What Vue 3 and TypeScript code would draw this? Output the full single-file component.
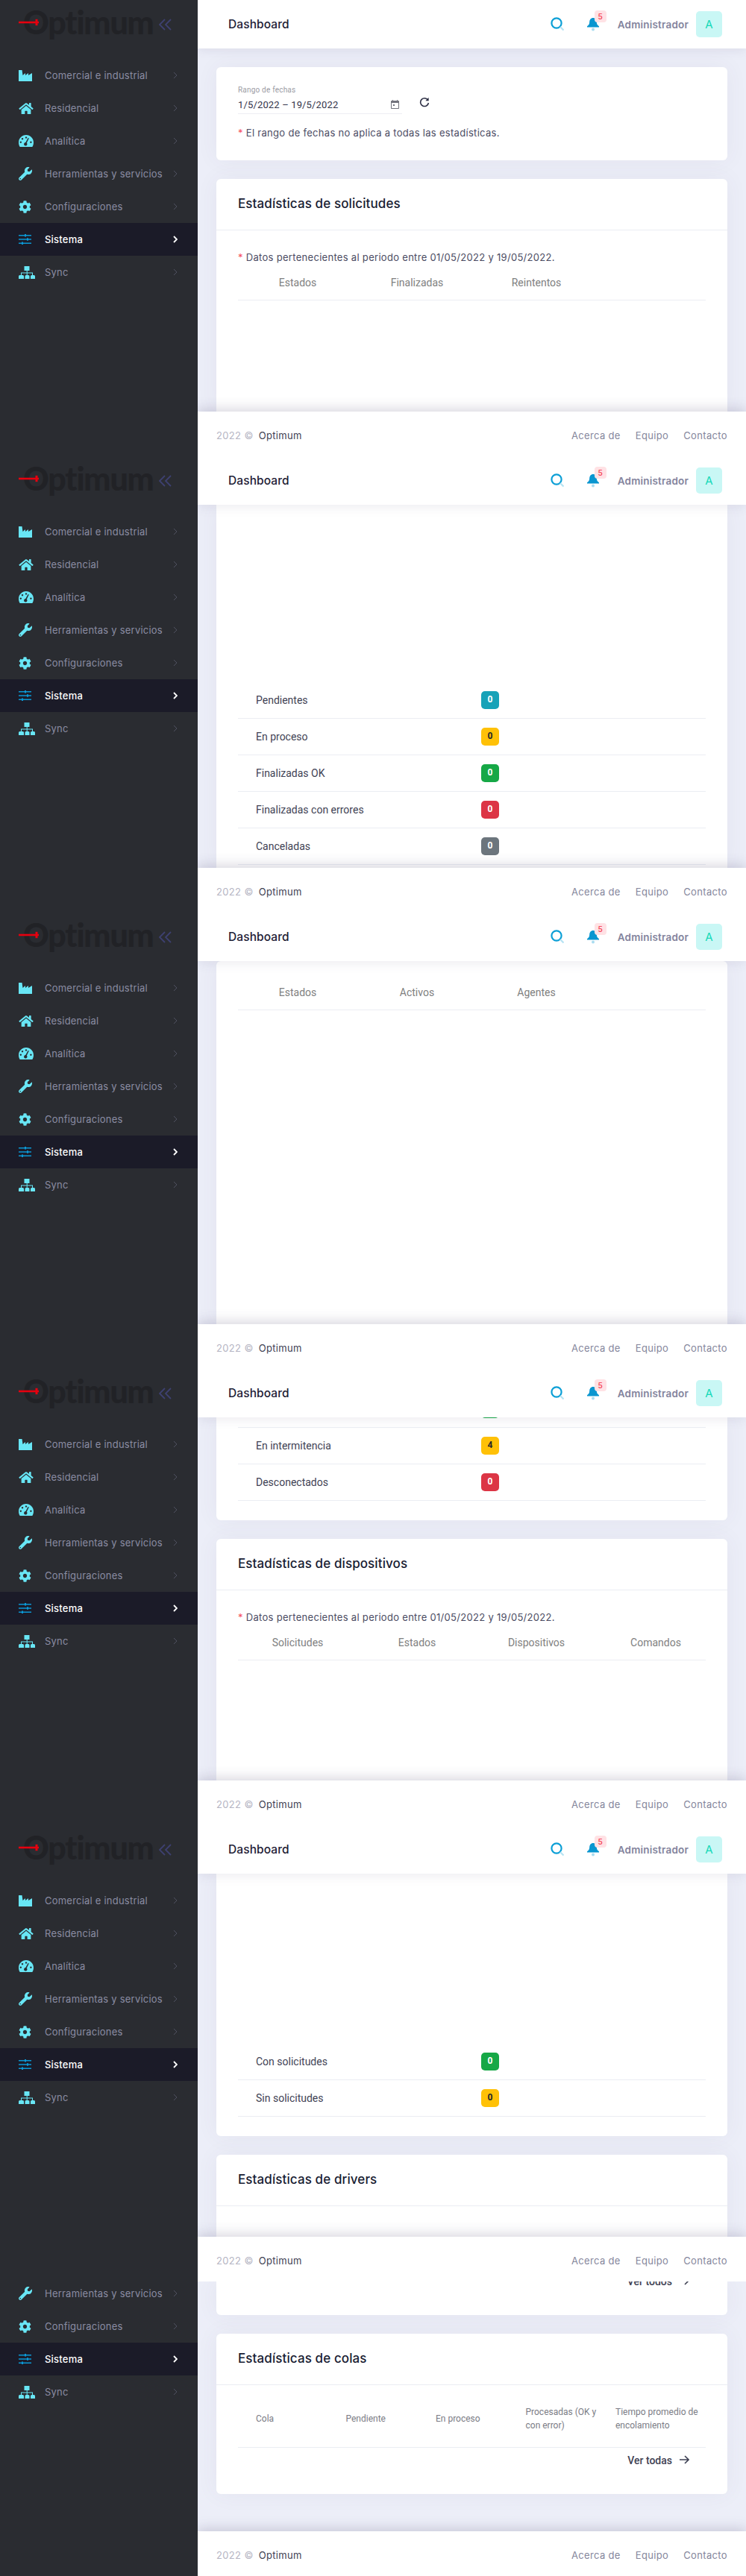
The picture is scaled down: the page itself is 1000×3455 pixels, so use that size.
<template>
  <div class="page">
    <section v-for="shot in shots" :key="shot" class="shot" :class="{ last: shot === 6 }">
      <aside class="sidebar">
        <div v-if="shot !== 6" class="brand">
          <span class="logo-text">Optimum</span>
          <svg class="logo-arrow" width="28" height="10" viewBox="0 0 28 10">
            <path d="M0 5h27" stroke="#e6000f" stroke-width="2.6" />
            <path d="M24 .8v8.4" stroke="#e6000f" stroke-width="3" />
          </svg>
          <svg class="collapse" width="17" height="16" viewBox="0 0 17 16" fill="none" stroke="#3d4070" stroke-width="1.8">
            <path d="M8 1 1 8l7 7M16 1 9 8l7 7" />
          </svg>
        </div>
        <nav class="menu">
          <a
            v-for="item in shot === 6 ? menu.slice(3) : menu"
            :key="item.label"
            class="menu-item"
            :class="{ active: item.active }"
          >
            <span class="menu-icon">
              <svg :width="item.w" :height="item.h" :viewBox="item.box">
                <path :d="item.d" fill-rule="evenodd" />
              </svg>
            </span>
            <span class="menu-label">{{ item.label }}</span>
            <svg class="menu-chevron" width="6" height="10" viewBox="0 0 6 10" fill="none">
              <path d="M1 1l4 4-4 4" />
            </svg>
          </a>
        </nav>
      </aside>

      <div class="main">
        <header v-if="shot !== 6" class="topbar">
          <h1>Dashboard</h1>
          <svg class="search" width="18" height="19" viewBox="0 0 18 19" fill="none">
            <circle cx="8" cy="8" r="6.6" stroke="#0c9fd6" stroke-width="2.2" />
            <path d="M13 13l4.500 4.500" stroke="#b5e3f3" stroke-width="2.2" />
          </svg>
          <span class="bell">
            <svg width="18" height="19" viewBox="0 0 18 19">
              <path d="M9 1c3 0 4.600 2.400 4.800 5.500.2 2.900 1 4.300 3.200 5.700v1.300H1v-1.300c2.200-1.400 3-2.800 3.200-5.700C4.400 3.400 6 1 9 1z" fill="#0a96d0" />
              <circle cx="9" cy="16.500" r="2" fill="#a9dcf0" />
            </svg>
            <b class="bell-count">5</b>
          </span>
          <span class="user-name">Administrador</span>
          <span class="avatar">A</span>
        </header>

        <div class="content">
          <!-- first screen -->
          <template v-if="shot === 1">
            <div class="card filter">
              <div class="filter-line">
                <div class="date-field">
                  <label>Rango de fechas</label>
                  <div class="date-value">
                    <span>1/5/2022 – 19/5/2022</span>
                    <svg width="11" height="12" viewBox="0 0 11 12">
                      <path d="M2 0h1v1h5V0h1v1h1.200c.4 0 .8.4.8.8v9.400c0 .4-.4.8-.8.8H.8c-.4 0-.8-.4-.8-.8V1.800C0 1.400.4 1 .8 1H2zM1 4v7h9V4zm2 2h2v2H3z" fill="#71727c" fill-rule="evenodd" />
                    </svg>
                  </div>
                </div>
                <svg class="refresh" width="14" height="14" viewBox="0 0 14 14" fill="none" stroke="#2d2f45" stroke-width="1.600">
                  <path d="M11.800 4.500A5.400 5.400 0 1 0 12.400 8" />
                  <path d="M12.600 .8v4.400H8.400" fill="#2d2f45" stroke="none" />
                </svg>
              </div>
              <p class="note"><i>*</i> El rango de fechas no aplica a todas las estadísticas.</p>
            </div>
            <div class="card grow clipped">
              <div class="card-head"><h2>Estadísticas de solicitudes</h2></div>
              <div class="card-body">
                <p class="note"><i>*</i> {{ period }}</p>
                <div class="thead">
                  <span v-for="h in ['Estados', 'Finalizadas', 'Reintentos']" :key="h">{{ h }}</span>
                </div>
              </div>
            </div>
          </template>

          <!-- request states -->
          <div v-else-if="shot === 2" class="card grow clipped flush end tail">
            <div v-for="row in requestRows" :key="row.label" class="row">
              <span>{{ row.label }}</span>
              <b class="badge" :class="row.tone">{{ row.value }}</b>
            </div>
          </div>

          <!-- agents -->
          <div v-else-if="shot === 3" class="card grow clipped flush">
            <div class="thead agents">
              <span v-for="h in ['Estados', 'Activos', 'Agentes']" :key="h">{{ h }}</span>
            </div>
          </div>

          <!-- devices -->
          <template v-else-if="shot === 4">
            <div class="card flush open-top pad-bottom">
              <div class="row cut">
                <span></span>
                <b class="badge success">0</b>
              </div>
              <div v-for="row in agentRows" :key="row.label" class="row">
                <span>{{ row.label }}</span>
                <b class="badge" :class="row.tone">{{ row.value }}</b>
              </div>
            </div>
            <div class="card grow clipped">
              <div class="card-head"><h2>Estadísticas de dispositivos</h2></div>
              <div class="card-body">
                <p class="note"><i>*</i> {{ period }}</p>
                <div class="thead">
                  <span v-for="h in ['Solicitudes', 'Estados', 'Dispositivos', 'Comandos']" :key="h">{{ h }}</span>
                </div>
              </div>
            </div>
          </template>

          <!-- device requests + drivers -->
          <template v-else-if="shot === 5">
            <div class="card grow flush open-top end pad-bottom">
              <div v-for="row in deviceRows" :key="row.label" class="row">
                <span>{{ row.label }}</span>
                <b class="badge" :class="row.tone">{{ row.value }}</b>
              </div>
            </div>
            <div class="card clipped drivers">
              <div class="card-head"><h2>Estadísticas de drivers</h2></div>
            </div>
          </template>

          <!-- queues, page end -->
          <template v-else>
            <div class="card flush open-top see-all cut-more">
              <a class="more">Ver todos <svg width="13" height="12" viewBox="0 0 13 12" fill="none"><path d="M0 6h12M7 1l5 5-5 5" /></svg></a>
            </div>
            <div class="card">
              <div class="card-head"><h2>Estadísticas de colas</h2></div>
              <div class="card-body queue-body">
                <div class="qhead">
                  <span v-for="h in queueHead" :key="h">{{ h }}</span>
                </div>
                <div class="see-all">
                  <a class="more">Ver todas <svg width="13" height="12" viewBox="0 0 13 12" fill="none"><path d="M0 6h12M7 1l5 5-5 5" /></svg></a>
                </div>
              </div>
            </div>
          </template>
        </div>

        <footer class="footer">
          <span class="copy"><em>2022 ©</em> Optimum</span>
          <span class="links"><a>Acerca de</a><a>Equipo</a><a>Contacto</a></span>
        </footer>
      </div>
    </section>
  </div>
</template>

<script setup lang="ts">
interface MenuItem {
  label: string
  w: number
  h: number
  box: string
  d: string
  active?: boolean
}

interface StatRow {
  label: string
  value: number
  tone: string
}

const shots = [1, 2, 3, 4, 5, 6]

const period = 'Datos pertenecientes al periodo entre 01/05/2022 y 19/05/2022.'

const menu: MenuItem[] = [
  {
    label: 'Comercial e industrial',
    w: 18,
    h: 15,
    box: '0 0 18 15',
    d: 'M0 0h4.500l1 7L9 4v3l4-3v3l5-3v11H0z'
  },
  {
    label: 'Residencial',
    w: 20,
    h: 17,
    box: '0 0 576 512',
    d: 'M280.37 148.26L96 300.11V464a16 16 0 0 0 16 16l112.06-.29a16 16 0 0 0 15.92-16V368a16 16 0 0 1 16-16h64a16 16 0 0 1 16 16v95.64a16 16 0 0 0 16 16.05L464 480a16 16 0 0 0 16-16V300L295.67 148.26a12.19 12.19 0 0 0-15.3 0zM571.6 251.47L488 182.56V44.05a12 12 0 0 0-12-12h-56a12 12 0 0 0-12 12v72.61L318.47 43a48 48 0 0 0-61 0L4.34 251.47a12 12 0 0 0-1.6 16.9l25.5 31A12 12 0 0 0 45.15 301l235.22-193.74a12.19 12.19 0 0 1 15.3 0L530.9 301a12 12 0 0 0 16.9-1.6l25.5-31a12 12 0 0 0-1.7-16.93z'
  },
  {
    label: 'Analítica',
    w: 20,
    h: 16,
    box: '0 0 20 16',
    d: 'M10 0C4.500 0 0 4.500 0 10c0 2.300.6 4.400 1.700 6h16.600c1.100-1.600 1.700-3.700 1.700-6 0-5.500-4.500-10-10-10zM10 2.300a1.200 1.200 0 1 0 .01 0zM5 4a1.200 1.200 0 1 0 .01 0zM2.800 8.500a1.200 1.200 0 1 0 .01 0zM16.400 8.500a1.200 1.200 0 1 0 .01 0zM13.800 4.500l-3 6.200a2.200 2.200 0 1 1-1.500-.6l3.300-6.100z'
  },
  {
    label: 'Herramientas y servicios',
    w: 18,
    h: 18,
    box: '0 0 512 512',
    d: 'M507.73 109.1c-2.24-9.03-13.54-12.09-20.12-5.51l-74.36 74.36-67.88-11.31-11.31-67.88 74.36-74.36c6.62-6.62 3.43-17.9-5.66-20.16-47.38-11.74-99.55.91-136.58 37.93-39.64 39.64-50.55 97.1-34.05 147.2L18.74 402.76c-24.99 24.99-24.99 65.51 0 90.5 24.99 24.99 65.51 24.99 90.5 0l213.21-213.21c50.12 16.71 107.47 5.68 147.37-34.22 37.07-37.07 49.7-89.32 37.91-136.73zM64 472c-13.25 0-24-10.75-24-24 0-13.26 10.75-24 24-24s24 10.74 24 24c0 13.25-10.75 24-24 24z'
  },
  {
    label: 'Configuraciones',
    w: 17,
    h: 17,
    box: '0 0 512 512',
    d: 'M487.4 315.7l-42.6-24.6c4.3-23.2 4.3-47 0-70.2l42.6-24.6c4.9-2.8 7.1-8.6 5.500-14-11.1-35.6-30-67.8-54.7-94.6-3.8-4.1-10-5.1-14.8-2.3L380.8 110c-17.9-15.4-38.5-27.3-60.8-35.1V25.8c0-5.6-3.9-10.5-9.4-11.7-36.7-8.2-74.3-7.8-109.2 0-5.5 1.2-9.4 6.1-9.4 11.7V75c-22.2 7.9-42.8 19.8-60.8 35.1L88.7 85.5c-4.9-2.8-11-1.9-14.8 2.3-24.7 26.7-43.6 58.9-54.7 94.6-1.7 5.4.6 11.2 5.5 14L67.3 221c-4.3 23.2-4.3 47 0 70.2l-42.6 24.6c-4.9 2.8-7.1 8.6-5.5 14 11.1 35.6 30 67.8 54.7 94.6 3.8 4.1 10 5.1 14.8 2.3l42.6-24.6c17.9 15.4 38.5 27.3 60.8 35.1v49.2c0 5.6 3.9 10.5 9.4 11.7 36.7 8.2 74.3 7.8 109.2 0 5.5-1.2 9.4-6.1 9.4-11.7v-49.2c22.2-7.9 42.8-19.8 60.8-35.1l42.6 24.6c4.9 2.8 11 1.9 14.8-2.3 24.7-26.7 43.6-58.9 54.7-94.6 1.5-5.5-.7-11.3-5.6-14.1zM256 336c-44.1 0-80-35.9-80-80s35.9-80 80-80 80 35.9 80 80-35.9 80-80 80z'
  },
  {
    label: 'Sistema',
    w: 17,
    h: 14,
    box: '0 0 17 14',
    d: 'M0 1h8V0h2v1h7v1.500h-7v1H8v-1H0zM0 6.300h11v-1h2v1h4v1.500h-4v1h-2v-1H0zM0 11.500h4v-1h2v1h11V13H6v1H4v-1H0z',
    active: true
  },
  {
    label: 'Sync',
    w: 22,
    h: 17,
    box: '0 0 22 17',
    d: 'M7.500 0h7v6H11.700v2.500H19V12h1.500a1.500 1.500 0 0 1 1.500 1.500V17h-6v-3.500a1.500 1.500 0 0 1 1.500-1.500H18V9.500H11.700V12H13a1.500 1.500 0 0 1 1.500 1.500V17h-6v-3.500A1.500 1.500 0 0 1 10 12h.7V9.500H4V12h1.500A1.500 1.500 0 0 1 7 13.500V17H0v-3.500A1.500 1.500 0 0 1 1.500 12H3V8.500h7.700V6H7.500z'
  }
]

const requestRows: StatRow[] = [
  { label: 'Pendientes', value: 0, tone: 'info' },
  { label: 'En proceso', value: 0, tone: 'warning' },
  { label: 'Finalizadas OK', value: 0, tone: 'success' },
  { label: 'Finalizadas con errores', value: 0, tone: 'danger' },
  { label: 'Canceladas', value: 0, tone: 'secondary' }
]

const agentRows: StatRow[] = [
  { label: 'En intermitencia', value: 4, tone: 'warning' },
  { label: 'Desconectados', value: 0, tone: 'danger' }
]

const deviceRows: StatRow[] = [
  { label: 'Con solicitudes', value: 0, tone: 'success' },
  { label: 'Sin solicitudes', value: 0, tone: 'warning' }
]

const queueHead = [
  'Cola',
  'Pendiente',
  'En proceso',
  'Procesadas (OK y\ncon error)',
  'Tiempo promedio de\nencolamiento'
]
</script>

<style>
body {
  background: #2a2c31;
}

* {
  box-sizing: border-box;
}
</style>

<style scoped>
.page {
  width: 1000px;
  font-family: Roboto, "Liberation Sans", sans-serif;
  color: #3f4254;
}

.shot {
  display: flex;
  height: 612px;
  overflow: hidden;
}

.shot.last {
  height: 395px;
}

/* sidebar */
.sidebar {
  flex: 0 0 265px;
  background: #2a2c31;
  position: relative;
  z-index: 2;
}

.brand {
  position: relative;
  height: 79px;
}

.logo-text {
  position: absolute;
  left: 31px;
  top: 1px;
  font-family: Lato, Inter, sans-serif;
  font-weight: 900;
  font-size: 43px;
  line-height: 58px;
  letter-spacing: -1.2px;
  color: #212226;
}

.logo-arrow {
  position: absolute;
  left: 25px;
  top: 25px;
}

.collapse {
  position: absolute;
  left: 213px;
  top: 25px;
}

.shot.last .menu {
  margin-top: -6px;
}

.menu-item {
  display: flex;
  align-items: center;
  height: 44px;
  padding: 0 27px 0 25px;
  font-family: Inter, "Open Sans", sans-serif;
  font-size: 13px;
  letter-spacing: 0.22px;
  color: #8b8ca3;
}

.menu-icon {
  flex: 0 0 35px;
  display: flex;
  align-items: center;
}

.menu-icon svg {
  fill: #68e6f5;
  display: block;
}

.menu-label {
  flex: 1;
  white-space: nowrap;
}

.menu-chevron {
  stroke: #4f5160;
  stroke-width: 1;
}

.menu-item.active {
  background: #1b1b28;
  color: #fff;
  font-weight: 500;
}

.menu-item.active .menu-icon svg {
  fill: #0b97d4;
}

.menu-item.active .menu-chevron {
  stroke: #fff;
  stroke-width: 1.8;
}

/* main column */
.main {
  flex: 1;
  min-width: 0;
  display: flex;
  flex-direction: column;
  background: #eceef8;
}

.topbar {
  flex: 0 0 65px;
  display: flex;
  align-items: center;
  padding: 0 32px 0 41px;
  background: #fff;
  box-shadow: 0 3px 14px rgba(80, 70, 110, 0.1);
  position: relative;
  z-index: 1;
}

.topbar h1 {
  flex: 1;
  margin: 0;
  font-family: Inter, sans-serif;
  font-size: 15.5px;
  font-weight: 500;
  letter-spacing: 0.1px;
  color: #1e2035;
}

.search {
  margin-right: 30px;
}

.bell {
  position: relative;
  display: flex;
  margin-right: 24px;
}

.bell-count {
  position: absolute;
  left: 11px;
  top: -9px;
  width: 16px;
  height: 16px;
  border-radius: 4px;
  background: #ffe2e5;
  color: #f64e60;
  font-family: Inter, sans-serif;
  font-size: 10px;
  font-weight: 600;
  line-height: 16px;
  text-align: center;
}

.user-name {
  font-family: Inter, sans-serif;
  font-size: 13.5px;
  font-weight: 600;
  letter-spacing: 0.2px;
  color: #83849d;
  margin-right: 10px;
}

.avatar {
  width: 35px;
  height: 35px;
  border-radius: 5px;
  background: #c9f7f5;
  color: #14d9b8;
  font-family: Inter, sans-serif;
  font-size: 15px;
  line-height: 35px;
  text-align: center;
}

.content {
  flex: 1;
  min-height: 0;
  display: flex;
  flex-direction: column;
  gap: 25px;
  padding: 0 25px;
  overflow: hidden;
}

.footer {
  flex: 0 0 60px;
  display: flex;
  align-items: center;
  justify-content: space-between;
  padding: 4px 25px 0;
  background: #fff;
  box-shadow: 0 -3px 16px rgba(70, 60, 100, 0.22);
  position: relative;
  z-index: 1;
  font-family: Inter, sans-serif;
  font-size: 13px;
  letter-spacing: 0.35px;
  color: #3f4254;
}

.copy em {
  font-style: normal;
  color: #b5b5c3;
  margin-right: 3px;
}

.links {
  display: flex;
  gap: 20px;
  color: #85869c;
}

/* cards */
.card {
  background: #fff;
  border-radius: 6px;
  box-shadow: 0 0 30px rgba(82, 63, 105, 0.06);
}

.grow {
  flex: 1;
  min-height: 0;
}

.clipped {
  border-bottom-left-radius: 0;
  border-bottom-right-radius: 0;
}

.open-top {
  border-top-left-radius: 0;
  border-top-right-radius: 0;
}

.flush {
  padding: 0 29px;
}

.end {
  display: flex;
  flex-direction: column;
  justify-content: flex-end;
}

.tail {
  border-radius: 0;
  padding-bottom: 4px;
}

.pad-bottom {
  padding-bottom: 26px;
}

.filter {
  flex: 0 0 125px;
  margin-top: 25px;
  padding: 24px 29px 0;
}

.filter-line {
  display: flex;
  align-items: flex-start;
  gap: 23px;
}

.date-field {
  width: 220px;
  border-bottom: 1px solid #edeef3;
}

.date-field label {
  display: block;
  font-size: 10px;
  line-height: 14px;
  color: #9b9ba3;
  letter-spacing: 0.2px;
}

.date-value {
  display: flex;
  align-items: center;
  justify-content: space-between;
  padding-right: 4px;
  height: 24px;
  font-size: 13px;
  letter-spacing: 0.15px;
  color: #33344a;
}

.refresh {
  margin-top: 16px;
}

.note {
  margin: 0;
  font-family: Inter, sans-serif;
  font-size: 13px;
  line-height: 19px;
  letter-spacing: 0.3px;
  color: #4b4c63;
}

.filter .note {
  margin-top: 16px;
}

.note i {
  font-style: normal;
  color: #f64e60;
}

.card-head {
  height: 69px;
  padding: 0 29px 3px;
  display: flex;
  align-items: center;
  border-bottom: 1px solid #ebedf3;
}

.card-head h2 {
  margin: 0;
  font-family: Inter, sans-serif;
  font-size: 17px;
  font-weight: 500;
  letter-spacing: 0.1px;
  color: #181c32;
}

.drivers {
  flex: 0 0 110px;
}

.card-body {
  padding: 27px 29px 0;
}

.thead {
  display: flex;
  height: 48px;
  align-items: center;
  border-bottom: 1px solid #ebedf3;
  font-size: 14px;
  color: #808080;
}

.thead span {
  flex: 0 0 160px;
  text-align: center;
}

.thead.agents {
  margin-top: 18px;
}

.row {
  display: grid;
  grid-template-columns: 326px 1fr;
  align-items: center;
  height: 49px;
  padding-left: 24px;
  border-bottom: 1px solid #ebedf3;
  font-size: 14px;
  color: #3f4254;
}

.row .badge {
  margin-left: -24px;
}

.row.cut {
  margin-top: -35px;
}

.badge {
  width: 24px;
  height: 24px;
  border-radius: 5px;
  font-size: 12px;
  font-weight: 700;
  line-height: 22px;
  text-align: center;
  color: #fff;
}

.info {
  background: #17a2b8;
}

.warning {
  background: #ffc107;
  color: #212529;
}

.success {
  background: #16a846;
}

.danger {
  background: #dc3545;
}

.secondary {
  background: #6c757d;
}

/* queues */
.queue-body {
  padding-bottom: 28px;
}

.qhead {
  display: grid;
  grid-template-columns: repeat(4, 120.5px) 1fr;
  align-items: center;
  padding-bottom: 20px;
  border-bottom: 1px solid #ebedf3;
  font-size: 12px;
  line-height: 18px;
  color: #7b7c85;
  height: 57px;
}

.qhead span {
  padding-left: 24px;
  white-space: pre;
}

.see-all {
  display: flex;
  justify-content: flex-end;
}

.cut-more {
  padding-bottom: 28px;
}

.cut-more .more {
  margin-top: -17px;
}

.more {
  display: flex;
  align-items: center;
  gap: 10px;
  height: 34px;
  padding-right: 22px;
  font-size: 14px;
  font-weight: 500;
  color: #3f4254;
}

.more svg {
  stroke: #3f4254;
  stroke-width: 1.6;
  margin-top: -3px;
}
</style>
